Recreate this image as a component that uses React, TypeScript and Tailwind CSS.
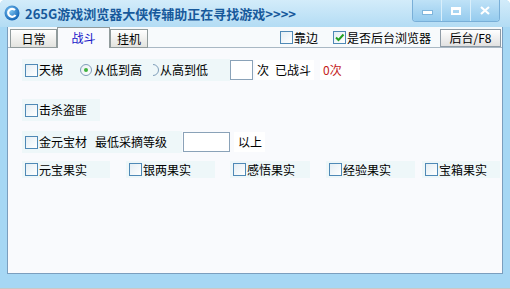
import React from "react";

function Box({ checked = false }: { checked?: boolean }) {
  return (
    <span className="relative w-[13px] h-[13px] border border-[#4f89b6] bg-gradient-to-br from-[#e4eef4] to-white shrink-0 flex items-center justify-center">
      {checked && (
        <svg width="11" height="11" viewBox="0 0 11 11">
          <path d="M2 5.5 L4.5 8 L9.5 2.5" fill="none" stroke="#21a121" strokeWidth="2" />
        </svg>
      )}
    </span>
  );
}

function Radio({ on = false }: { on?: boolean }) {
  return (
    <span className="w-[12px] h-[12px] rounded-full border border-[#7f9db9] bg-gradient-to-br from-[#e8eef2] to-white shrink-0 flex items-center justify-center">
      {on && <span className="w-[4px] h-[4px] rounded-full bg-[#3eb33e]" />}
    </span>
  );
}

function Item({ label, w, ml }: { label: string; w: string; ml: string }) {
  return (
    <div className={`${w} ${ml} h-[17px] bg-[#eef7f9] flex items-center pl-[3px]`}>
      <Box />
      <span className="ml-[1px]">{label}</span>
    </div>
  );
}

export default function App() {
  return (
    <div className="w-[510px] h-[289px] bg-[#a6d7f4] flex flex-col rounded-t-[5px] overflow-hidden font-['Noto_Sans_CJK_SC',sans-serif] text-[12px] leading-[14px] text-black">
      {/* title bar */}
      <div className="h-[27px] flex items-start bg-gradient-to-b from-[#d3ecfa] to-[#b3dcf4] shrink-0">
        <svg className="ml-[4px] mt-[5px]" width="16" height="16" viewBox="0 0 16 16">
          <defs>
            <radialGradient id="g" cx="0.4" cy="0.35" r="0.7">
              <stop offset="0" stopColor="#7cc4f2" />
              <stop offset="1" stopColor="#0d5fb3" />
            </radialGradient>
          </defs>
          <circle cx="8" cy="8" r="7.5" fill="url(#g)" />
          <path d="M11 5 A4 4 0 1 0 11.5 10" fill="none" stroke="#ffffff" strokeWidth="2.2" />
        </svg>
        <span className="ml-[5px] mt-[5px] text-[13px] font-bold leading-[17px] text-[#17599b]">
          265G游戏浏览器大侠传辅助正在寻找游戏&gt;&gt;&gt;&gt;
        </span>
        <div className="ml-auto mr-[10px] flex h-[22px] border border-t-0 border-[#79afd8] rounded-b-[4px] overflow-hidden">
          <div className="w-[29px] h-full bg-gradient-to-b from-[#bfe2f7] to-[#95cbee] flex items-center justify-center border-r border-[#d9effb]">
            <span className="w-[9px] h-[3px] bg-white mt-[3px] shadow-[0_0_0_1px_#7fb5dc]" />
          </div>
          <div className="w-[29px] h-full bg-gradient-to-b from-[#bfe2f7] to-[#95cbee] flex items-center justify-center border-r border-[#d9effb]">
            <span className="w-[10px] h-[8px] border-2 border-t-[3px] border-white" />
          </div>
          <div className="w-[28px] h-full bg-gradient-to-b from-[#bfe2f7] to-[#95cbee] flex items-center justify-center">
            <svg width="10" height="9" viewBox="0 0 10 9">
              <path d="M1 1 L9 8 M9 1 L1 8" stroke="#ffffff" strokeWidth="2.2" />
            </svg>
          </div>
        </div>
      </div>

      {/* panel */}
      <div className="mx-[7px] h-[247px] bg-[#f9fafd] border-l border-r border-b border-[#7b9ebe] flex flex-col shrink-0">
        {/* tab row */}
        <div className="h-[21px] flex items-end pl-[2px] border-b border-[#a9b8c4] bg-[#f7fafc]">
          <div className="w-[47px] h-[19px] mb-[-1px] border border-[#919b9c] bg-gradient-to-b from-white to-[#e3e3df] flex items-center justify-center">
            日常
          </div>
          <div className="w-[53px] h-[21px] mb-[-1px] border border-b-0 border-[#919b9c] bg-[#f9fafd] flex items-center justify-center text-[#1515c8]">
            战斗
          </div>
          <div className="w-[38px] h-[19px] mb-[-1px] border border-[#919b9c] bg-gradient-to-b from-white to-[#e3e3df] flex items-center justify-center">
            挂机
          </div>
          <div className="ml-auto flex items-center self-center mt-[1px]">
            <Box />
            <span className="ml-[1px]">靠边</span>
            <span className="ml-[15px]" />
            <Box checked />
            <span className="ml-[1px]">是否后台浏览器</span>
            <div className="ml-[9px] mr-[1px] w-[61px] h-[18px] border border-[#8f9ba6] bg-gradient-to-b from-white to-[#e1e1e1] flex items-center justify-center">
              后台/F8
            </div>
          </div>
        </div>

        {/* content */}
        <div className="flex flex-col pl-[14px] pt-[11px]">
          {/* row 1 */}
          <div className="flex items-center h-[22px]">
            <div className="w-[208px] h-[22px] bg-[#eef7f9] flex items-center pl-[3px]">
              <Box />
              <span className="ml-[1px]">天梯</span>
              <span className="ml-[17px]" />
              <Radio on />
              <span className="ml-[2px]">从低到高</span>
              <span className="ml-[11px] w-[6px] h-[12px] overflow-hidden flex justify-end">
                <span className="w-[12px] h-[12px] rounded-full border border-[#7f9db9] shrink-0" />
              </span>
              <span className="ml-[1px]">从高到低</span>
            </div>
            <div className="w-[23px] h-[20px] border border-[#8aa2b8] bg-white" />
            <div className="ml-[2px] h-[20px] bg-white flex items-center pl-[2px] pr-[3px]">
              次<span className="ml-[6px]">已战斗</span>
            </div>
            <div className="ml-[6px] h-[20px] bg-white flex items-center pl-[3px] w-[40px] text-[#c41a1a]">0次</div>
          </div>

          {/* row 2 */}
          <div className="flex items-center h-[22px] mt-[18px]">
            <div className="w-[78px] h-[22px] bg-[#eef7f9] flex items-center pl-[3px]">
              <Box />
              <span className="ml-[1px]">击杀盗匪</span>
            </div>
          </div>

          {/* row 3 */}
          <div className="flex items-center h-[22px] mt-[10px]">
            <div className="w-[160px] h-[22px] bg-[#eef7f9] flex items-center pl-[3px]">
              <Box />
              <span className="ml-[1px]">金元宝材</span>
              <span className="ml-[8px]">最低采摘等级</span>
            </div>
            <div className="ml-[1px] w-[47px] h-[20px] border border-[#8aa2b8] bg-white" />
            <div className="ml-[4px] h-[20px] bg-white flex items-center pl-[4px] pr-[3px]">以上</div>
          </div>

          {/* row 4 */}
          <div className="flex items-center h-[17px] mt-[8px]">
            <Item label="元宝果实" w="w-[88px]" ml="ml-0" />
            <Item label="银两果实" w="w-[89px]" ml="ml-[16px]" />
            <Item label="感悟果实" w="w-[80px]" ml="ml-[15px]" />
            <Item label="经验果实" w="w-[89px]" ml="ml-[16px]" />
            <Item label="宝箱果实" w="w-[78px]" ml="ml-[7px]" />
          </div>
        </div>
      </div>
      <div className="flex-1 border-b border-[#c8c8c8]" />
    </div>
  );
}
